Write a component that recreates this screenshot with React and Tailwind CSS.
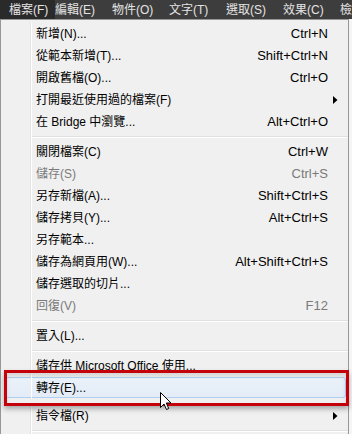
import React from "react";

const F = { fontFamily: '"Liberation Sans", "Noto Sans CJK TC", sans-serif' };

const groups = [
  [
    { l: "新增(N)...", s: "Ctrl+N" },
    { l: "從範本新增(T)...", s: "Shift+Ctrl+N" },
    { l: "開啟舊檔(O)...", s: "Ctrl+O" },
    { l: "打開最近使用過的檔案(F)", sub: true },
    { l: "在 Bridge 中瀏覽...", s: "Alt+Ctrl+O" },
  ],
  [
    { l: "關閉檔案(C)", s: "Ctrl+W" },
    { l: "儲存(S)", s: "Ctrl+S", dis: true },
    { l: "另存新檔(A)...", s: "Shift+Ctrl+S" },
    { l: "儲存拷貝(Y)...", s: "Alt+Ctrl+S" },
    { l: "另存範本..." },
    { l: "儲存為網頁用(W)...", s: "Alt+Shift+Ctrl+S" },
    { l: "儲存選取的切片..." },
    { l: "回復(V)", s: "F12", dis: true },
  ],
  [{ l: "置入(L)..." }],
  [
    { l: "儲存供 Microsoft Office 使用..." },
    { l: "轉存(E)...", hi: true },
    { l: "指令檔(R)", sub: true },
  ],
];

function Gutter() {
  return <div className="w-[30px] shrink-0 self-stretch border-r border-[#e2e3e3]" />;
}

function Row({ it }) {
  return (
    <div className={"relative flex h-[22px] " + (it.hi ? "mb-[6px]" : "")}>
      {it.hi && (
        <div className="absolute left-[3px] right-[2px] top-0 h-[21px] rounded-[3px] border border-[#aecff0] bg-[linear-gradient(#eaf1f9,#e3ecf7)]" />
      )}
      <Gutter />
      <div
        className={
          "relative flex flex-1 items-center border-l border-white pl-[4px] pr-[20px] text-[12px] " +
          (it.dis ? "text-[#7a7a7a]" : "text-black")
        }
      >
        <span className="flex-1 whitespace-nowrap">{it.l}</span>
        {it.s && <span className="text-[13px] whitespace-nowrap">{it.s}</span>}
        {it.sub && (
          <svg className="absolute right-[10px] top-[7px]" width="5" height="8" viewBox="0 0 5 8">
            <path d="M0 0 L4.5 4 L0 8 Z" fill="#000" />
          </svg>
        )}
      </div>
    </div>
  );
}

function Sep() {
  return (
    <div className="flex h-[8px]">
      <Gutter />
      <div className="flex flex-1 flex-col justify-center border-l border-white">
        <div className="h-px bg-[#e0e0e0]" />
        <div className="h-px bg-white" />
      </div>
    </div>
  );
}

const bar = ["檔案(F)", "編輯(E)", "物件(O)", "文字(T)", "選取(S)", "效果(C)", "檢視(V)"];

export default function App() {
  return (
    <div className="relative h-[434px] w-[352px] overflow-hidden bg-[#f5f5f5]" style={F}>
      <div className="flex h-[19px] bg-[#3d3d3d] text-[12px] text-[#e4e4e4]">
        {bar.map((b, i) => (
          <div
            key={b}
            className={
              "flex shrink-0 items-center whitespace-nowrap " +
              (i === 0 ? "w-[55px] bg-[#2a2a2a] pl-[9px]" : "w-[57px]")
            }
          >
            {b}
          </div>
        ))}
      </div>
      <div className="w-[349px] border border-[#979797] bg-[#f0f0f0] pt-[3px]">
        {groups.map((g, gi) => (
          <React.Fragment key={gi}>
            {g.map((it) => (
              <Row key={it.l} it={it} />
            ))}
            <Sep />
          </React.Fragment>
        ))}
      </div>
      <div className="absolute left-[4px] top-[370px] h-[36px] w-[345px] border-[3px] border-[#c4000b] shadow-[0_3px_5px_rgba(0,0,0,0.3),inset_0_3px_4px_rgba(0,0,0,0.12)]" />
      <svg className="absolute left-[160px] top-[392px]" width="13" height="19" viewBox="0 0 13 19">
        <path
          d="M0.5 0.5 L0.5 15.5 L4 12 L6.5 17.5 L8.7 16.5 L6.3 11 L11 11 Z"
          fill="#fff"
          stroke="#000"
          strokeWidth="1"
          strokeLinejoin="miter"
        />
      </svg>
    </div>
  );
}
